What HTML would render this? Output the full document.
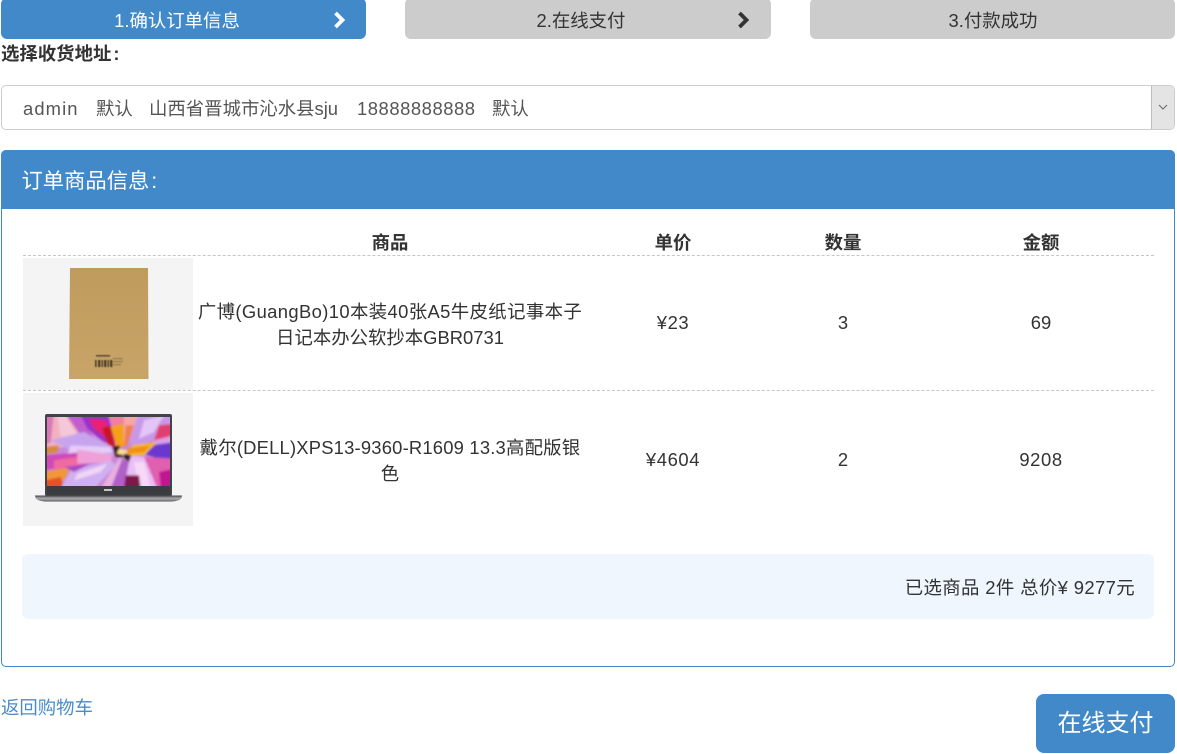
<!DOCTYPE html>
<html lang="zh-CN"><head><meta charset="utf-8"><title>确认订单信息</title>
<style>
html,body{margin:0;padding:0;background:#fff}
body{width:1177px;height:754px;position:relative;overflow:hidden;font-family:"Liberation Sans","Noto Sans CJK SC",sans-serif;font-size:18.4px;color:#333}
.a{position:absolute}
.t{position:absolute;white-space:nowrap;line-height:26px}
.c{transform:translateX(-50%);text-align:center}
.n{letter-spacing:.6px}
.step{position:absolute;top:-2px;height:41px;border-radius:6px;background:#ccc}
.dash{position:absolute;left:23px;width:1131px;height:0;border-top:1px dashed #c6c6c6}
</style></head><body>
<div class="step" style="left:1px;width:365px;background:#4189c9"></div>
<div class="step" style="left:405px;width:366px"></div>
<div class="step" style="left:810px;width:365px"></div>
<div class="t c" style="left:177px;top:8px;color:#fff">1.确认订单信息</div>
<div class="t c" style="left:581px;top:8px">2.在线支付</div>
<div class="t c" style="left:993px;top:8px">3.付款成功</div>
<svg class="a" style="left:332px;top:11px" width="16" height="18" viewBox="0 0 16 18"><path d="M3.5 2L10.5 9L3.5 16" fill="none" stroke="#fff" stroke-width="3.8"/></svg>
<svg class="a" style="left:736px;top:11px" width="16" height="18" viewBox="0 0 16 18"><path d="M3.5 2L10.5 9L3.5 16" fill="none" stroke="#333" stroke-width="3.8"/></svg>

<div class="t" style="left:1px;top:41px;font-weight:bold">选择收货地址<span style="margin-left:2px">:</span></div>

<div class="a" style="left:1px;top:85px;width:1174px;height:45px;box-sizing:border-box;border:1.5px solid #ccc;border-radius:5px;background:#fff"></div>
<div class="a" style="left:1151px;top:86px;width:23px;height:43px;box-sizing:border-box;background:#e4e4e4;border-left:1.5px solid #bdbdbd;border-radius:0 4px 4px 0"></div>
<svg class="a" style="left:1156px;top:102px" width="14" height="10" viewBox="0 0 14 10"><path d="M3 3L7 7L11 3" fill="none" stroke="#666" stroke-width="1"/></svg>
<div class="t" style="left:23px;top:96px;color:#555;letter-spacing:1.1px">admin</div>
<div class="t" style="left:96px;top:96px;color:#555">默认</div>
<div class="t" style="left:149px;top:96px;color:#555">山西省晋城市沁水县sju</div>
<div class="t" style="left:357px;top:96px;color:#555;letter-spacing:.55px">18888888888</div>
<div class="t" style="left:492px;top:96px;color:#555">默认</div>

<div class="a" style="left:1px;top:150px;width:1174px;height:517px;box-sizing:border-box;border:1.5px solid #4189c9;border-radius:5px;background:#fff"></div>
<div class="a" style="left:1px;top:150px;width:1174px;height:59px;background:#4189c9;border-radius:5px 5px 0 0"></div>
<div class="t" style="left:21.5px;top:168px;color:#fff;font-size:21.3px">订单商品信息<span style="margin-left:2px">:</span></div>

<div class="t c" style="left:390px;top:230px;font-weight:bold">商品</div>
<div class="t c" style="left:673px;top:230px;font-weight:bold">单价</div>
<div class="t c" style="left:843px;top:230px;font-weight:bold">数量</div>
<div class="t c" style="left:1041px;top:230px;font-weight:bold">金额</div>
<div class="dash" style="top:255px"></div>
<div class="dash" style="top:390px"></div>

<div class="a" style="left:23px;top:258px;width:170px;height:132px;background:#f4f4f4"></div>
<div class="a" style="left:23px;top:393px;width:170px;height:133px;background:#f4f4f4"></div>

<svg class="a" style="left:67px;top:266px" width="84" height="115" viewBox="0 0 84 115">
<defs><linearGradient id="k" x1="0" y1="0" x2="0" y2="1"><stop offset="0" stop-color="#c09b5e"/><stop offset="1" stop-color="#c8a468"/></linearGradient>
<filter id="kb"><feGaussianBlur stdDeviation=".55"/></filter></defs>
<polygon points="3,2 81,2 81.5,113 2,113" fill="url(#k)"/>
<g filter="url(#kb)">
<rect x="29" y="89" width="14" height="1.6" fill="#5d4b30"/>
<rect x="28" y="94" width="1.6" height="7" fill="#4f4028"/><rect x="31" y="94" width="2.4" height="7" fill="#4f4028"/><rect x="34.5" y="94" width="1.4" height="7" fill="#4f4028"/><rect x="37" y="94" width="2.4" height="7" fill="#4f4028"/><rect x="40.5" y="94" width="1.4" height="7" fill="#4f4028"/><rect x="43" y="94" width="2.4" height="7" fill="#4f4028"/>
<rect x="46" y="92" width="10" height="1.2" fill="#937a4e"/><rect x="46" y="95" width="10" height="1.2" fill="#937a4e"/><rect x="46" y="98" width="8" height="1.2" fill="#937a4e"/>
</g>
</svg>

<svg class="a" style="left:33px;top:412px" width="152" height="92" viewBox="0 0 152 92">
<defs>
<clipPath id="s"><rect x="14" y="5" width="123" height="69"/></clipPath>
<filter id="b" filterUnits="userSpaceOnUse" x="0" y="0" width="152" height="92"><feGaussianBlur stdDeviation="1.1"/></filter>
<linearGradient id="base" x1="0" y1="0" x2="0" y2="1"><stop offset="0" stop-color="#3f4043"/><stop offset=".45" stop-color="#a8a8aa"/><stop offset=".8" stop-color="#8a8a8c"/><stop offset="1" stop-color="#444446"/></linearGradient>
</defs>
<rect x="12" y="2" width="127" height="82" rx="2" fill="#424347"/>
<g clip-path="url(#s)"><rect x="14" y="5" width="123" height="69" fill="#c88ad8"/>
<g filter="url(#b)"><g transform="translate(11,0) scale(.33333)">
<polygon points="0,0 70,0 130,100 0,110" fill="#f2b0c0"/>
<polygon points="0,0 30,0 20,90 0,100" fill="#d878b8"/>
<polygon points="40,10 65,10 100,70 50,75" fill="#f4c8d8"/>
<polygon points="60,0 110,0 150,80 110,70" fill="#c060d0"/>
<polygon points="20,85 120,60 210,110 200,140 90,120" fill="#c8a4ee"/>
<polygon points="80,100 200,105 205,122 70,128" fill="#e4ccf8"/>
<polygon points="0,105 45,100 40,120 0,128" fill="#d88a3a"/>
<polygon points="0,130 100,122 130,135 60,165 0,175" fill="#d04ab8"/>
<polygon points="30,145 130,130 120,160 30,180" fill="#f06aa0"/>
<polygon points="100,112 205,128 200,150 100,155" fill="#f0a0d8"/>
<polygon points="0,180 80,165 60,205 0,230" fill="#f09838"/>
<polygon points="0,205 50,195 60,230 0,230" fill="#e8502a"/>
<polygon points="50,230 80,175 200,145 215,160 150,230" fill="#d0b0f0"/>
<polygon points="100,185 190,155 170,180 90,205" fill="#f2d4f6"/>
<polygon points="60,165 140,155 90,180" fill="#a848c8"/>
<polygon points="105,0 190,0 215,95 180,90 130,50" fill="#9a30c8"/>
<polygon points="135,20 185,25 215,90 195,85 150,50" fill="#e82070"/>
<polygon points="175,50 200,40 215,110 190,95" fill="#c81828"/>
<polygon points="190,0 240,0 240,40 205,45" fill="#f080a0"/>
<polygon points="200,45 240,35 240,100 220,110" fill="#f5a018"/>
<polygon points="240,0 290,0 265,65 240,100" fill="#f4a8a8"/>
<polygon points="245,40 270,40 250,100 240,105" fill="#f08050"/>
<polygon points="285,0 390,0 390,60 270,105 255,90" fill="#c898e8"/>
<polygon points="300,25 360,10 330,60 285,80" fill="#e4c6f6"/>
<polygon points="345,40 390,35 390,75 330,85" fill="#e04070"/>
<polygon points="330,85 390,70 390,100 320,105" fill="#d8a0e8"/>
<polygon points="320,100 390,90 390,150 340,140 300,125" fill="#6a38d0"/>
<polygon points="265,100 340,90 300,130 250,130" fill="#f8b820"/>
<polygon points="250,110 320,100 300,120 250,125" fill="#f09018"/>
<polygon points="300,135 390,140 390,230 335,230" fill="#e060b0"/>
<polygon points="345,180 390,170 390,230 350,230" fill="#c01890"/>
<polygon points="240,130 300,135 340,230 230,230" fill="#e8c0f4"/>
<polygon points="170,230 225,140 240,145 200,230" fill="#e8b0e0"/>
<polygon points="200,230 235,140 255,150 240,230" fill="#b060c8"/>
<polygon points="270,150 300,150 320,230 285,230" fill="#f8d8f8"/>
<polygon points="245,190 285,190 290,230 240,230" fill="#801848"/>
<polygon points="205,105 225,100 240,135 215,135" fill="#401818"/>
<polygon points="225,110 250,115 245,130 218,125" fill="#f8e090"/>
<polygon points="240,125 262,130 255,150 240,140" fill="#301820"/>
</g></g></g>
<rect x="14" y="74" width="123" height="9" fill="#3b3c3f"/>
<rect x="71" y="77" width="8" height="2" fill="#c4c4c4"/>
<path d="M2 83.5H149L148.5 86Q146 89.5 138 89.5H14Q5 89.5 2.5 86Z" fill="url(#base)"/>
</svg>

<div class="t c" style="left:390px;top:299px;letter-spacing:.38px">广博(GuangBo)10本装40张A5牛皮纸记事本子<br><span style="letter-spacing:0">日记本办公软抄本GBR0731</span></div>
<div class="t c n" style="left:673px;top:310px">¥23</div>
<div class="t c" style="left:843px;top:310px">3</div>
<div class="t c" style="left:1041px;top:310px">69</div>
<div class="t c" style="left:390px;top:435px;letter-spacing:.2px">戴尔(DELL)XPS13-9360-R1609 13.3高配版银<br>色</div>
<div class="t c n" style="left:673px;top:447px">¥4604</div>
<div class="t c" style="left:843px;top:447px">2</div>
<div class="t c n" style="left:1041px;top:447px">9208</div>

<div class="a" style="left:22px;top:554px;width:1132px;height:65px;background:#eff6fe;border-radius:6px"></div>
<div class="t" style="right:42px;top:575px;letter-spacing:.38px">已选商品 2件 总价¥ 9277元</div>

<div class="t" style="left:1px;top:695px;color:#4a8cc9">返回购物车</div>
<div class="a" style="left:1036px;top:694px;width:139px;height:59px;background:#4189c9;border-radius:8px"></div>
<div class="t c" style="left:1105.5px;top:711px;color:#fff;font-size:24px">在线支付</div>
</body></html>
